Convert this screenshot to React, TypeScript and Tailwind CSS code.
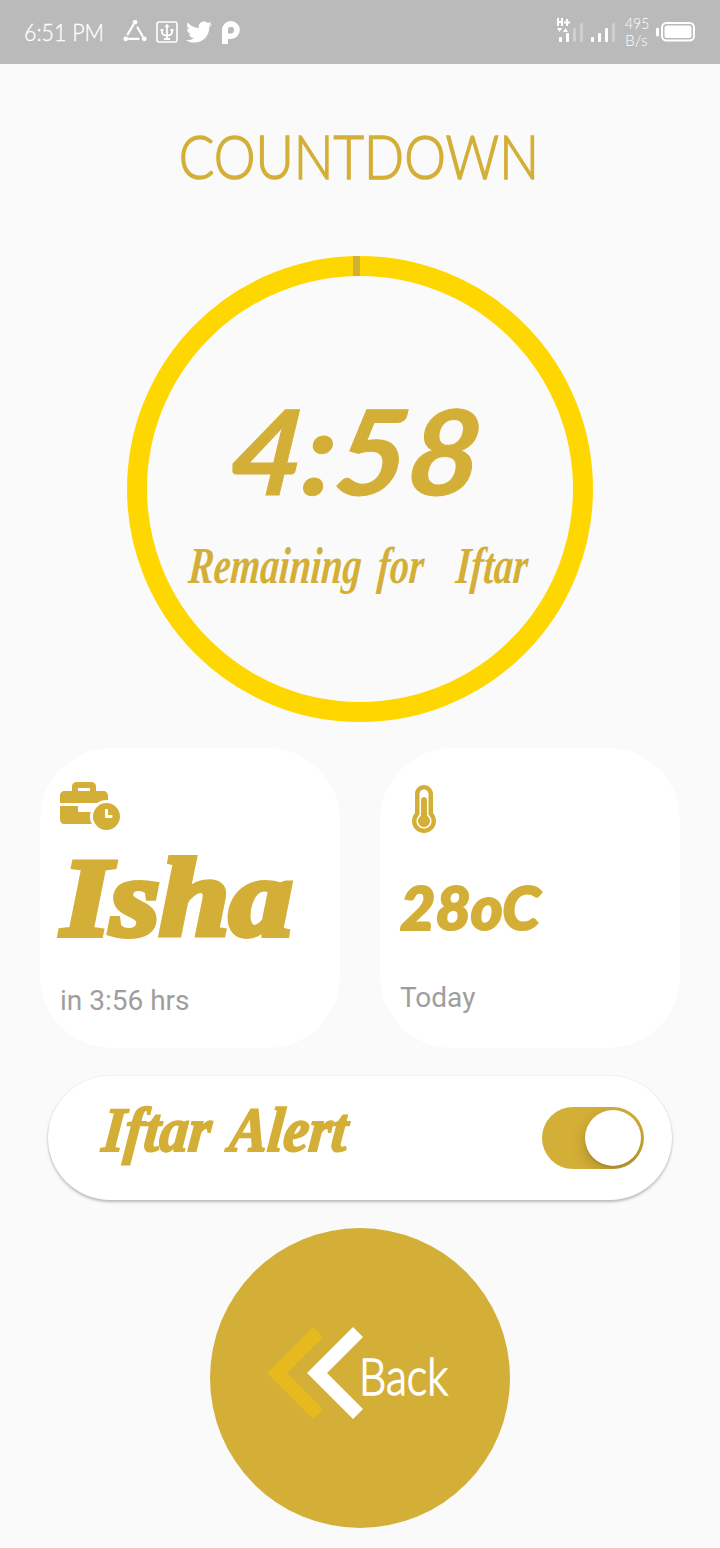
import React from "react";
import { FaBusinessTime, FaThermometerThreeQuarters, FaTwitter } from "react-icons/fa";

function StatusBar() {
  return (
    <header className="flex h-16 w-full items-center bg-[#bababa] pl-6 pr-6 text-white">
      <span className="w-[99px] origin-left whitespace-nowrap font-['Lato',sans-serif] text-[23px] font-light leading-none">
        <span className="inline-block origin-left scale-x-[0.93] [-webkit-text-stroke:0.3px_white]">6:51 PM</span>
      </span>
      <div className="flex items-center">
        <svg className="h-6 w-6" viewBox="0 0 24 24" fill="none" stroke="white" strokeWidth="2.2" strokeLinecap="round">
          <path d="M10.500 4.500L4.800 14.300M14.500 7.500L19.500 16M6 18.800H15.500" />
          <circle cx="12" cy="2.200" r="1.300" fill="white" />
          <circle cx="2.800" cy="18.800" r="1.300" fill="white" />
          <circle cx="21.300" cy="18.800" r="1.300" fill="white" />
        </svg>
        <svg className="ml-[9px] h-[22px] w-[22px]" viewBox="0 0 22 22" fill="none" stroke="white" strokeWidth="1.6">
          <rect x="1" y="1" width="20" height="20" rx="2" />
          <path d="M11 4v14M6 8v3q0 3.500 5 3.500T16 11V8M8 18h6" strokeWidth="1.8" />
          <path d="M8.500 6L11 2.800L13.500 6zM4.500 8h3v2h-3zM14.500 8h3v2h-3z" fill="white" stroke="none" />
        </svg>
        <FaTwitter className="ml-[8px] h-[26px] w-[26px]" />
        <svg className="ml-[9px] h-[23px] w-[19px]" viewBox="0 0 19 23">
          <path
            fill="white"
            fillRule="evenodd"
            d="M1 23V9A8.500 9 0 0 1 9.500 0H10A8.800 9 0 0 1 10 18H7V23ZM7 12.500H9.800A3.200 3.400 0 0 0 9.800 5.700Q7 5.700 7 9Z"
          />
        </svg>
      </div>
      <div className="ml-auto flex items-center">
        <svg className="mb-1 h-[26px] w-[60px]" viewBox="0 0 60 26" fill="white">
          <path d="M1 1h2v3h2V1h2v8H5V6H3v3H1zM10 2h2v2.500h2v2h-2V9h-2V6.500H8v-2h2zM1 11h5l-2.500 4zM7 15h5l-2.500-4z" />
          <rect x="3" y="20" width="3" height="5" rx="1" />
          <rect x="10" y="16" width="3" height="9" rx="1" />
          <rect x="17" y="11" width="3" height="14" rx="1" opacity=".3" />
          <rect x="24" y="6" width="3" height="19" rx="1" opacity=".3" />
          <rect x="35" y="20" width="3" height="5" rx="1" />
          <rect x="42" y="16" width="3" height="9" rx="1" />
          <rect x="49" y="11" width="3" height="14" rx="1" />
          <rect x="56" y="6" width="3" height="19" rx="1" opacity=".3" />
        </svg>
        <div className="ml-[9px] w-[31px] font-['Lato',sans-serif] text-[15.500px] font-light leading-[17px]">
          <div className="origin-left scale-x-[0.9]">495</div>
          <div className="origin-left">B/s</div>
        </div>
        <svg className="h-5 w-10" viewBox="0 0 40 20">
          <rect x="0" y="5.500" width="3" height="9" rx="1.500" fill="white" />
          <rect x="6" y="1" width="32" height="17.500" rx="4.500" fill="none" stroke="white" strokeWidth="2" />
          <rect x="8.500" y="3.500" width="27" height="12.500" rx="2.500" fill="white" />
        </svg>
      </div>
    </header>
  );
}

function Timer() {
  return (
    <section className="relative mx-auto mt-16 flex h-[466px] w-[466px] flex-col items-center rounded-full border-[20px] border-[#ffd700]">
      <div className="absolute -top-5 left-[206px] h-5 w-[7px] bg-[#d4af37]" />
      <div className="mt-[114px] flex h-[120px] w-[256px] items-center justify-center whitespace-nowrap pr-[6px] font-['Lato',sans-serif] text-[118px] font-bold italic leading-none">
        <span className="-skew-x-6 scale-x-[1.06] [-webkit-text-stroke:1px_#d4af37]">4:58</span>
      </div>
      <div className="mt-[24px] flex h-[64px] w-[344px] items-center justify-center whitespace-nowrap pr-1 font-['Liberation_Serif',serif] text-[52px] font-bold italic leading-none">
        <span className="-skew-x-6 scale-x-[0.73] [word-spacing:9px]">Remaining for&nbsp; Iftar</span>
      </div>
    </section>
  );
}

export default function App() {
  return (
    <main className="flex h-[1548px] w-[720px] flex-col overflow-hidden bg-[#fafafa] text-[#d4af37]">
      <StatusBar />
      <h1 className="mx-auto mt-[56px] flex h-[72px] w-[360px] items-center justify-center whitespace-nowrap pb-[3px] pr-[2px] font-['Lato',sans-serif] text-[62px] font-light leading-none">
        <span className="scale-x-[0.85] [-webkit-text-stroke:1.500px_#d4af37]">COUNTDOWN</span>
      </h1>
      <Timer />
      <div className="mx-10 mt-[26px] flex justify-between">
        <section className="flex h-[300px] w-[300px] flex-col rounded-[72px] bg-white pl-5 pt-[34px]">
          <FaBusinessTime className="h-12 w-[60px]" />
          <div className="mt-[8px] flex h-[118px] items-center whitespace-nowrap pl-[2px] font-['Liberation_Serif',serif] text-[111px] font-bold italic leading-none">
            <span className="origin-left scale-x-[1.13] [-webkit-text-stroke:6px_#d4af37]">Isha</span>
          </div>
          <p className="mt-[29px] font-['Roboto',sans-serif] text-[28px] leading-8 text-[#9e9e9e]">in 3:56 hrs</p>
        </section>
        <section className="flex h-[300px] w-[300px] flex-col rounded-[72px] bg-white pl-5 pt-[37px]">
          <FaThermometerThreeQuarters className="ml-3 h-12 w-6" />
          <div className="mt-[38px] flex h-[72px] items-center whitespace-nowrap pb-[2px] font-['Lato',sans-serif] text-[61px] font-black italic leading-none">
            <span className="origin-left [-webkit-text-stroke:2px_#d4af37]">28oC</span>
          </div>
          <p className="mt-[39px] font-['Roboto',sans-serif] text-[28px] leading-8 text-[#9e9e9e]">Today</p>
        </section>
      </div>
      <section className="mx-12 mt-7 flex h-[124px] shrink-0 items-center rounded-full bg-white pl-[55px] pr-7 shadow-[0_2px_3px_rgba(0,0,0,0.25),0_0_2px_rgba(0,0,0,0.08)]">
        <div className="flex h-[76px] w-[260px] items-center whitespace-nowrap pb-4 font-['Liberation_Serif',serif] text-[63px] font-bold italic leading-none">
          <span className="origin-left -skew-x-6 scale-x-[0.91] [-webkit-text-stroke:2px_#d4af37] [word-spacing:7px]">Iftar Alert</span>
        </div>
        <button
          role="switch"
          aria-checked="true"
          className="ml-auto flex h-[62px] w-[102px] items-center justify-end overflow-hidden rounded-full bg-[#d4af37] pr-[3px]"
        >
          <span className="h-14 w-14 rounded-full bg-white shadow-[0_5px_15px_rgba(0,0,0,0.2),0_2px_2px_rgba(0,0,0,0.1)]" />
        </button>
      </section>
      <button className="mx-auto mt-7 flex h-[300px] w-[300px] shrink-0 items-center rounded-full bg-[#d4af37] pl-[57px] text-white">
        <svg className="mb-[10px] h-[92px] w-[96px] shrink-0" viewBox="0 0 96 92">
          <path d="M46 0L0 46L46 92L56 82L20 46L56 10Z" fill="#e6b91e" />
          <path d="M86 0L40 46L86 92L96 82L60 46L96 10Z" fill="white" />
        </svg>
        <span className="-ml-[4px] mb-[7px] origin-left scale-x-[0.83] whitespace-nowrap font-['Lato',sans-serif] text-[52px] font-light leading-none [-webkit-text-stroke:1.500px_white]">
          Back
        </span>
      </button>
    </main>
  );
}
